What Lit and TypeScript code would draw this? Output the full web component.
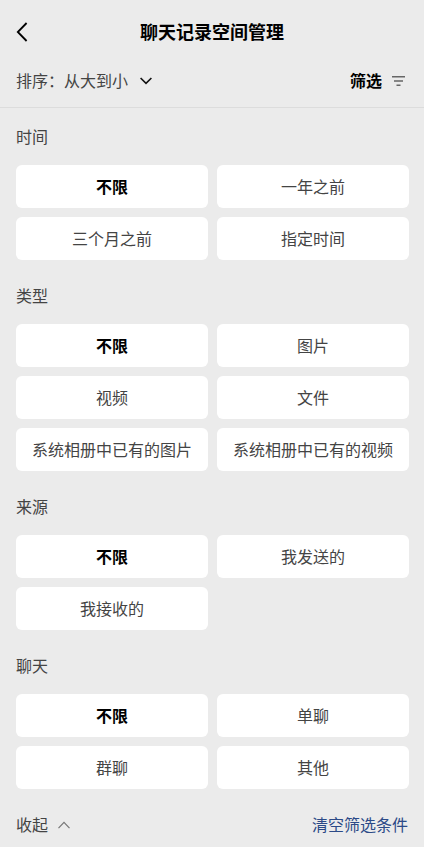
import { LitElement, html, css } from "lit";
import { customElement, property, state } from "lit/decorators.js";
import { classMap } from "lit/directives/class-map.js";

interface Group {
  title: string;
  options: string[];
}

const GROUPS: Group[] = [
  { title: "时间", options: ["不限", "一年之前", "三个月之前", "指定时间"] },
  {
    title: "类型",
    options: ["不限", "图片", "视频", "文件", "系统相册中已有的图片", "系统相册中已有的视频"],
  },
  { title: "来源", options: ["不限", "我发送的", "我接收的"] },
  { title: "聊天", options: ["不限", "单聊", "群聊", "其他"] },
];

@customElement("filter-group")
export class FilterGroup extends LitElement {
  @property({ attribute: false }) group: Group = { title: "", options: [] };
  @property({ type: Number }) selected = 0;

  static styles = css`
    :host {
      display: block;
      margin-bottom: 24px;
    }
    .title {
      margin: 0;
      padding-bottom: 18px;
      font-size: 16px;
      font-weight: 400;
      line-height: 22px;
      color: #444;
    }
    .options {
      display: grid;
      grid-template-columns: 1fr 1fr;
      gap: 9px;
    }
    .option {
      min-width: 0;
      height: 43px;
      padding: 0 0 2px;
      border: 0;
      border-radius: 6px;
      background: #fff;
      color: #444;
      font: inherit;
      font-size: 16px;
      line-height: 22px;
      white-space: nowrap;
      cursor: pointer;
    }
    .chosen {
      color: #000;
      font-weight: 700;
    }
  `;

  private pick(index: number) {
    this.dispatchEvent(new CustomEvent("pick", { detail: index }));
  }

  render() {
    return html`
      <h2 class="title" id="title">${this.group.title}</h2>
      <div class="options" role="group" aria-labelledby="title">
        ${this.group.options.map(
          (name, i) => html`<button
            type="button"
            class=${classMap({ option: true, chosen: i === this.selected })}
            aria-pressed=${i === this.selected ? "true" : "false"}
            @click=${() => this.pick(i)}
          >${name}</button>`
        )}
      </div>
    `;
  }
}

@customElement("app-root")
export class AppRoot extends LitElement {
  @state() private selection: number[] = GROUPS.map(() => 0);
  @state() private open = true;

  static styles = css`
    :host {
      display: block;
      min-height: 100vh;
      background: #ebebeb;
      color: #444;
      font-family: "Noto Sans CJK SC", sans-serif;
      font-size: 16px;
      line-height: 22px;
    }
    button,
    select {
      margin: 0;
      padding: 0;
      border: 0;
      background: none;
      color: inherit;
      font: inherit;
      cursor: pointer;
    }
    svg {
      display: block;
      fill: none;
      stroke: currentColor;
    }
    .header {
      display: grid;
      grid-template-columns: 24px 1fr 24px;
      align-items: center;
      height: 64px;
      padding: 0 16px;
      color: #000;
    }
    .heading {
      margin: 0;
      padding-bottom: 2px;
      font-size: 18px;
      font-weight: 700;
      text-align: center;
    }
    .toolbar {
      display: flex;
      align-items: center;
      justify-content: space-between;
      padding: 5px 18px 14px 16px;
      border-bottom: 1px solid #dcdcdc;
    }
    .text {
      padding-bottom: 2px;
    }
    .sort {
      display: flex;
      align-items: center;
    }
    .select {
      appearance: none;
      padding: 0 23px 2px 0;
      margin-right: -12px;
    }
    .sort svg {
      color: #111;
      pointer-events: none;
    }
    .filter {
      display: flex;
      align-items: center;
      gap: 9px;
      color: #000;
      font-weight: 700;
    }
    .filter svg {
      color: #666;
    }
    .panel {
      padding: 17px 15px 0 16px;
    }
    .footer {
      display: flex;
      align-items: center;
      justify-content: space-between;
      padding: 0 16px 10px;
    }
    .collapse {
      display: flex;
      align-items: center;
      gap: 9px;
    }
    .collapse svg {
      color: #777;
    }
    .closed svg {
      transform: rotate(180deg);
    }
    .clear {
      padding-bottom: 2px;
      color: #2c4a87;
    }
  `;

  private choose(group: number, option: number) {
    this.selection = this.selection.map((v, i) => (i === group ? option : v));
  }

  render() {
    return html`
      <header class="header">
        <button type="button" aria-label="返回">
          <svg width="12" height="20" viewBox="0 0 12 20" stroke-width="1.8">
            <path d="M10.6 1 1.8 10l8.8 9" />
          </svg>
        </button>
        <h1 class="heading">聊天记录空间管理</h1>
      </header>
      <div class="toolbar">
        <div class="sort">
          <label class="text" for="sort">排序：</label>
          <select class="select" id="sort">
            <option>从大到小</option>
            <option>从小到大</option>
          </select>
          <svg width="12" height="8" viewBox="0 0 12 8" stroke-width="1.6">
            <path d="M.6 1 6 6.4 11.4 1" />
          </svg>
        </div>
        <button type="button" class="filter" @click=${() => (this.open = !this.open)}>
          <span class="text">筛选</span>
          <svg width="15" height="12" viewBox="0 0 15 12" stroke-width="1.6">
            <path d="M1 1.75h13M3 6h9M5.5 10.25h4" />
          </svg>
        </button>
      </div>
      <main class="panel">
        ${this.open
          ? GROUPS.map(
              (group, i) => html`<filter-group
                .group=${group}
                .selected=${this.selection[i]}
                @pick=${(e: CustomEvent<number>) => this.choose(i, e.detail)}
              ></filter-group>`
            )
          : null}
      </main>
      <footer class="footer">
        <button
          type="button"
          class=${classMap({ collapse: true, closed: !this.open })}
          @click=${() => (this.open = !this.open)}
        >
          <span class="text">收起</span>
          <svg width="14" height="8" viewBox="0 0 14 8" stroke-width="1.2">
            <path d="M1.5 7.2 7 1.3l5.5 5.9" />
          </svg>
        </button>
        <button
          type="button"
          class="clear"
          @click=${() => (this.selection = GROUPS.map(() => 0))}
        >清空筛选条件</button>
      </footer>
    `;
  }
}
